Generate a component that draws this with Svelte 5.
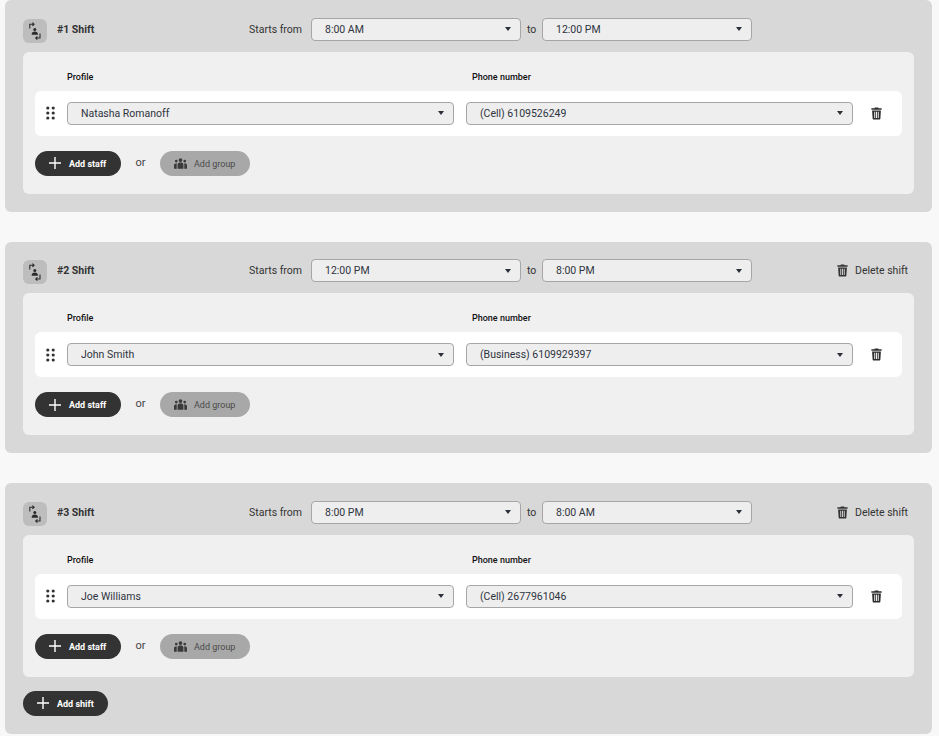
<script>
  const shifts = [
    { id: 1, from: '8:00 AM', to: '12:00 PM', name: 'Natasha Romanoff', phone: '(Cell) 6109526249' },
    { id: 2, from: '12:00 PM', to: '8:00 PM', name: 'John Smith', phone: '(Business) 6109929397' },
    { id: 3, from: '8:00 PM', to: '8:00 AM', name: 'Joe Williams', phone: '(Cell) 2677961046' }
  ]
</script>

{#snippet trash(cls)}
  <svg class={cls} viewBox="0 0 12 14" aria-hidden="true">
    <path d="M4.2 0.4h3.6l.5 1H11.6v1.5H.4V1.4h3.3z" />
    <path fill-rule="evenodd" d="M1.2 3.6h9.6l-.6 9.1c0 .5-.5.9-1 .9H2.8c-.5 0-1-.4-1-.9zM3.6 5.2v6.8h1V5.2zM5.5 5.2v6.8h1V5.2zM7.4 5.2v6.8h1V5.2z" />
  </svg>
{/snippet}

{#snippet plus()}
  <svg class="plus" viewBox="0 0 12 12" aria-hidden="true">
    <path d="M6 0v12M0 6h12" />
  </svg>
{/snippet}

{#snippet select(value, cls)}
  <div class="select {cls}">
    <span>{value}</span>
    <i class="caret"></i>
  </div>
{/snippet}

<main>
  {#each shifts as shift (shift.id)}
    <section class="shift">
      <header>
        <div class="badge">
          <svg viewBox="0 0 24 24" aria-hidden="true">
            <circle cx="11.8" cy="10.4" r="1.5" fill="#2b2b2b" />
            <path fill="#2b2b2b" d="M8.6 15.8c0-2.1 1.3-3.2 3.2-3.2s3.2 1.1 3.2 3.2z" />
            <path class="arrow" d="M6.8 9.4V5.2h4.2M9.4 3.6l1.7 1.6-1.7 1.6" />
            <path class="arrow" d="M17 14.6v4.4h-4.2M14.4 17.4l-1.7 1.6 1.7 1.6" />
          </svg>
        </div>
        <strong class="title">#{shift.id} Shift</strong>
        <span class="label">Starts from</span>
        {@render select(shift.from, 'time')}
        <span class="to">to</span>
        {@render select(shift.to, 'time')}
        {#if shift.id > 1}
          <button class="delete-shift">
            {@render trash('trash-sm')}
            Delete shift
          </button>
        {/if}
      </header>

      <div class="card">
        <div class="columns">
          <span>Profile</span>
          <span>Phone number</span>
        </div>
        <div class="row">
          <svg class="grip" viewBox="0 0 9 14" aria-hidden="true">
            <circle cx="1.8" cy="2" r="1.6" />
            <circle cx="7.2" cy="2" r="1.6" />
            <circle cx="1.8" cy="7" r="1.6" />
            <circle cx="7.2" cy="7" r="1.6" />
            <circle cx="1.8" cy="12" r="1.6" />
            <circle cx="7.2" cy="12" r="1.6" />
          </svg>
          {@render select(shift.name, 'wide')}
          {@render select(shift.phone, 'wide')}
          {@render trash('trash-row')}
        </div>
        <div class="actions">
          <button class="pill dark staff">
            {@render plus()}
            <span>Add staff</span>
          </button>
          <span class="or">or</span>
          <button class="pill muted">
            <svg class="group" viewBox="0 0 24 20" aria-hidden="true">
              <circle cx="12" cy="3.6" r="3.4" />
              <circle cx="4.2" cy="5.6" r="2.5" />
              <circle cx="19.8" cy="5.6" r="2.5" />
              <path d="M6.6 19.6v-7.6c0-2.6 2.2-3.8 5.4-3.8s5.4 1.2 5.4 3.8v7.6z" />
              <path d="M0 19.6v-6.4c0-2.4 1.7-3.7 5.2-3.7-.2.7-.2 1.4-.2 2.4v7.7zM24 19.6v-6.4c0-2.4-1.7-3.7-5.2-3.7.2.7.2 1.4.2 2.4v7.7z" />
            </svg>
            <span>Add group</span>
          </button>
        </div>
      </div>

      {#if shift.id === 3}
        <button class="pill dark add-shift">
          {@render plus()}
          <span>Add shift</span>
        </button>
      {/if}
    </section>
  {/each}
</main>

<style>
  :global(body) {
    background: #f8f8f8;
    font-family: Roboto, "Liberation Sans", sans-serif;
  }

  main {
    display: flex;
    flex-direction: column;
    gap: 30px;
    padding: 0 7px 2px 5px;
  }

  .shift {
    background: #d8d8d8;
    border-radius: 6px;
    padding: 0 18px 18px;
  }

  header {
    display: flex;
    align-items: center;
    height: 51.6px;
    padding-top: 6.6px;
    box-sizing: border-box;
    color: #333;
    font-size: 10.5px;
  }

  .badge {
    display: flex;
    flex: none;
    width: 24px;
    height: 24px;
    margin-top: 3px;
    border-radius: 6px;
    background: #bdbdbd;
  }

  .badge svg {
    width: 24px;
    height: 24px;
  }

  .arrow {
    fill: none;
    stroke: #2b2b2b;
    stroke-width: 1.1;
  }

  .title {
    width: 192px;
    margin-left: 10px;
    font-weight: 700;
    flex: none;
  }

  .label {
    width: 62px;
    flex: none;
  }

  .to {
    width: 15px;
    flex: none;
    margin-left: 6px;
  }

  .select {
    display: flex;
    align-items: center;
    justify-content: space-between;
    box-sizing: border-box;
    height: 23px;
    background: #eee;
    border: 1px solid #a6a6a6;
    border-radius: 4px;
    color: #2f3440;
    font-size: 10.5px;
    padding: 0 9px 0 13px;
  }

  .select.time {
    width: 210px;
    flex: none;
  }

  .select.wide {
    flex: none;
    width: 387px;
  }

  .caret {
    width: 0;
    height: 0;
    border-left: 3.5px solid transparent;
    border-right: 3.5px solid transparent;
    border-top: 4px solid #2a2f3a;
  }

  .delete-shift {
    display: flex;
    align-items: center;
    gap: 7px;
    margin-left: 85px;
    padding: 0;
    border: 0;
    background: none;
    color: #333;
    font: inherit;
    white-space: nowrap;
  }

  .trash-sm {
    width: 11px;
    height: 13px;
    fill: #333;
  }

  .trash-row {
    flex: none;
    width: 11px;
    height: 13px;
    margin-left: 18px;
    fill: #2c2c2c;
  }

  .card {
    background: #f0f0f0;
    border-radius: 6px;
    padding: 0 12px 18px;
  }

  .columns {
    display: flex;
    height: 39px;
    align-items: center;
    padding: 11px 0 0 32px;
    box-sizing: border-box;
    font-size: 9px;
    font-weight: 500;
    color: #111;
  }

  .columns span:first-child {
    width: 405px;
  }

  .row {
    display: flex;
    align-items: center;
    height: 45px;
    padding-left: 11px;
    background: #fff;
    border-radius: 6px;
    box-sizing: border-box;
  }

  .row .select + .select {
    margin-left: 12px;
  }

  .grip {
    flex: none;
    width: 9px;
    height: 14px;
    margin-right: 12px;
    fill: #333;
  }

  .actions {
    display: flex;
    align-items: center;
    margin-top: 15px;
  }

  .or {
    width: 39px;
    text-align: center;
    font-size: 11px;
    color: #444;
    margin-top: -2px;
  }

  .pill {
    display: inline-flex;
    align-items: center;
    height: 25px;
    border: 0;
    border-radius: 13px;
    font-family: inherit;
    font-size: 9px;
    white-space: nowrap;
  }

  .pill span {
    padding-top: 1px;
  }

  .dark {
    background: #333;
    color: #fff;
    font-weight: 700;
    gap: 8px;
    padding: 0 0 0 14px;
  }

  .staff {
    width: 86px;
  }

  .add-shift {
    display: flex;
    width: 85px;
    margin-top: 14px;
  }

  .muted {
    width: 90px;
    gap: 7px;
    padding: 0 0 0 14px;
    background: #a8a8a8;
    color: #4a4a4a;
    font-weight: 400;
  }

  .plus {
    width: 12px;
    height: 12px;
    fill: none;
    stroke: #fff;
    stroke-width: 1.4;
  }

  .group {
    width: 13px;
    height: 11px;
    fill: #3a3a3a;
  }
</style>
